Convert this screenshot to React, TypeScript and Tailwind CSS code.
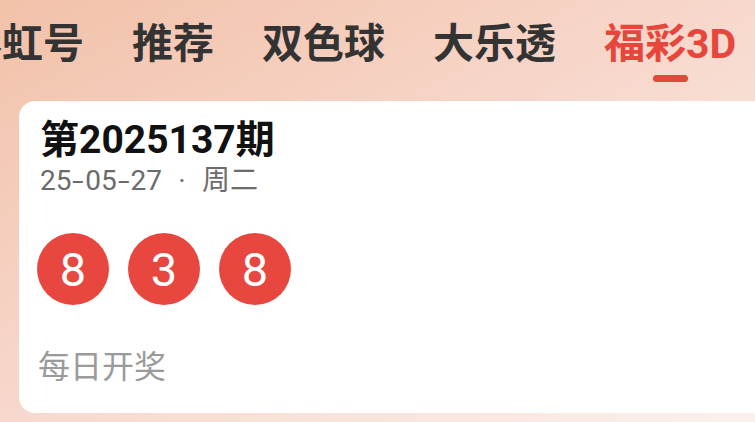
import React from 'react';

const tabs = ['彩虹号', '推荐', '双色球', '大乐透', '福彩3D'];
const activeTab = '福彩3D';
const balls = [8, 3, 8];

const font = { fontFamily: 'Roboto, "Noto Sans CJK SC", sans-serif' };

export default function App() {
  return (
    <div
      className="w-[755px] h-[422px] overflow-hidden bg-linear-to-br from-[#f2c1a9] via-[#f7d8cc] to-[#fbf1ec]"
      style={font}
    >
      {/* tab bar, scrolled so the first tab is cut off */}
      <div className="flex items-start gap-[48px] -ml-[39px] pt-[20px] whitespace-nowrap">
        {tabs.map((t) => {
          const active = t === activeTab;
          return (
            <div key={t} className="flex flex-col items-center shrink-0">
              <span
                className={`text-[41px] leading-[48px] font-bold ${active ? 'text-[#e6463c]' : 'text-[#333333]'}`}
              >
                {t}
              </span>
              {active && <div className="mt-[7px] h-[7px] w-[35px] rounded-full bg-[#e6463c]" />}
            </div>
          );
        })}
      </div>

      <div className="ml-[19px] mt-[19px] w-[760px] h-[312px] rounded-[16px] bg-white pl-[21px] pt-[17px]">
        <div className="text-[39px] leading-[45px] font-bold text-[#111111]">第2025137期</div>
        <div className="text-[28px] leading-[36px] text-[#6b6b6b] whitespace-nowrap">
          25<span className="inline-block mx-[3px] scale-x-150">-</span>05
          <span className="inline-block mx-[3px] scale-x-150">-</span>27
          <span className="inline-block w-[40px] text-center">·</span>周二
        </div>
        <div className="flex gap-[19px] mt-[34px] -ml-[3px]">
          {balls.map((n, i) => (
            <div
              key={i}
              className="w-[72px] h-[72px] rounded-full bg-[#e8473f] flex items-center justify-center text-white text-[47px] leading-none"
            >
              {n}
            </div>
          ))}
        </div>
        <div className="mt-[42px] text-[32px] leading-[40px] text-[#9a9a9a] -ml-[2px]">每日开奖</div>
      </div>
    </div>
  );
}
